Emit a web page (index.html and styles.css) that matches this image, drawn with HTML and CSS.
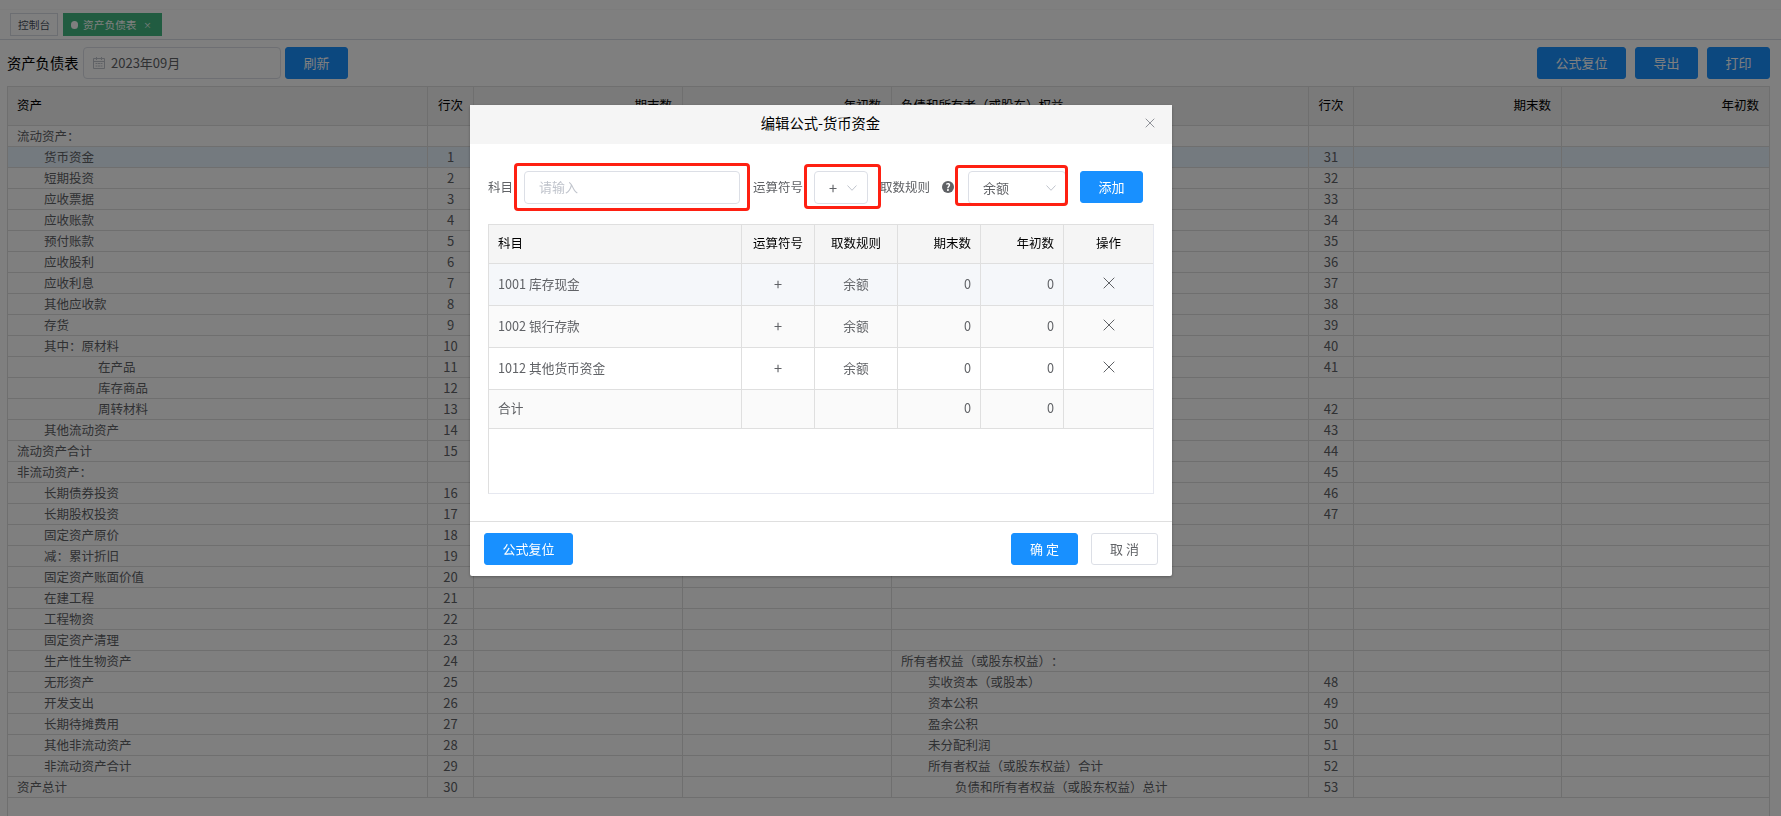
FILE: index.html
```html
<!DOCTYPE html>
<html lang="zh-CN">
<head>
    <meta charset="UTF-8">
    <meta name="viewport" content="width=device-width, initial-scale=1.0">
    <title>资产负债表</title>
    <link rel="stylesheet" href="styles.css">
</head>
<body>
    <div class="page">
        <div class="navbar"></div>
        <div class="tags">
            <span class="tag">控制台</span>
            <span class="tag active"><i class="dot"></i>资产负债表<i class="tag-close">×</i></span>
        </div>

        <div class="toolbar">
            <span class="toolbar-title">资产负债表</span>
            <div class="date-input">
                <svg class="calendar" viewBox="0 0 12 12" fill="none" stroke="#c0c4cc">
                    <path d="M.5 1.5h11v10H.5zM.5 4.5h11M3.5 0v3M8.5 0v3M2.5 6.5h2M5 6.5h2M7.500 6.500h2M2.500 9h2M5 9h2M7.500 9h2"/>
                </svg>
                <span>2023年09月</span>
            </div>
            <button class="btn primary">刷新</button>
            <div class="toolbar-right">
                <button class="btn primary">公式复位</button>
                <button class="btn primary">导出</button>
                <button class="btn primary">打印</button>
            </div>
        </div>

        <div class="sheet-wrap">
            <table class="sheet">
                <colgroup>
                    <col class="w-name"><col class="w-no"><col class="w-end"><col class="w-begin">
                    <col class="w-name2"><col class="w-no2"><col class="w-end2"><col>
                </colgroup>
                <thead>
                    <tr>
                        <th>资产</th>
                        <th class="center">行次</th>
                        <th class="right">期末数</th>
                        <th class="right">年初数</th>
                        <th>负债和所有者（或股东）权益</th>
                        <th class="center">行次</th>
                        <th class="right">期末数</th>
                        <th class="right">年初数</th>
                    </tr>
                </thead>
                <tbody id="sheetBody"></tbody>
            </table>
        </div>
    </div>

    <div class="mask">
        <div class="dialog">
            <div class="dialog-header">
                <span class="dialog-title">编辑公式-货币资金</span>
                <svg class="dialog-close" viewBox="0 0 10 10" fill="none" stroke="#909399"><path d="M.7.7l8.600 8.600M9.300.7L.7 9.300"/></svg>
            </div>

            <div class="dialog-body">
                <div class="form">
                    <label class="label-subject">科目</label>
                    <div class="field subject">请输入</div>
                    <label class="label-symbol">运算符号</label>
                    <div class="field symbol">
                        <span>+</span>
                        <svg class="arrow" viewBox="0 0 10 6" fill="none" stroke="#c0c4cc"><path d="M.5.5L5 5.300 9.500.5"/></svg>
                    </div>
                    <label class="label-rule">取数规则</label>
                    <span class="help">?</span>
                    <div class="field rule">
                        <span>余额</span>
                        <svg class="arrow" viewBox="0 0 10 6" fill="none" stroke="#c0c4cc"><path d="M.5.5L5 5.300 9.500.5"/></svg>
                    </div>
                    <button class="btn primary">添加</button>
                </div>

                <div class="formula-wrap">
                    <table class="formula">
                        <colgroup>
                            <col class="f-subject"><col class="f-symbol"><col class="f-num"><col class="f-num"><col class="f-num"><col>
                        </colgroup>
                        <thead>
                            <tr>
                                <th>科目</th>
                                <th class="center">运算符号</th>
                                <th class="center">取数规则</th>
                                <th class="right">期末数</th>
                                <th class="right">年初数</th>
                                <th class="center">操作</th>
                            </tr>
                        </thead>
                        <tbody>
                            <tr class="hover">
                                <td>1001 库存现金</td>
                                <td class="center plus">+</td>
                                <td class="center">余额</td>
                                <td class="right">0</td>
                                <td class="right">0</td>
                                <td class="center"><svg class="remove" viewBox="0 0 12 12" fill="none" stroke="#606266"><path d="M.7.7l10.600 10.600M11.300.7L.7 11.300"/></svg></td>
                            </tr>
                            <tr class="striped">
                                <td>1002 银行存款</td>
                                <td class="center plus">+</td>
                                <td class="center">余额</td>
                                <td class="right">0</td>
                                <td class="right">0</td>
                                <td class="center"><svg class="remove" viewBox="0 0 12 12" fill="none" stroke="#606266"><path d="M.7.7l10.600 10.600M11.300.7L.7 11.300"/></svg></td>
                            </tr>
                            <tr>
                                <td>1012 其他货币资金</td>
                                <td class="center plus">+</td>
                                <td class="center">余额</td>
                                <td class="right">0</td>
                                <td class="right">0</td>
                                <td class="center"><svg class="remove" viewBox="0 0 12 12" fill="none" stroke="#606266"><path d="M.7.7l10.600 10.600M11.300.7L.7 11.300"/></svg></td>
                            </tr>
                            <tr class="striped total">
                                <td>合计</td>
                                <td></td>
                                <td></td>
                                <td class="right">0</td>
                                <td class="right">0</td>
                                <td></td>
                            </tr>
                        </tbody>
                    </table>
                </div>
            </div>

            <div class="dialog-footer">
                <button class="btn primary">公式复位</button>
                <div class="footer-right">
                    <button class="btn primary wide">确 定</button>
                    <button class="btn wide">取 消</button>
                </div>
            </div>
        </div>
    </div>

    <script src="script.js"></script>
</body>
</html>
```

FILE: styles.css
```css
* {
    box-sizing: border-box;
}
body {
    margin: 0;
    height: 816px;
    overflow: hidden;
    background: #fff;
    color: #606266;
    font-family: "Noto Sans CJK SC", sans-serif;
    font-size: 12.5px;
    text-spacing-trim: space-all;
}
i {
    font-style: normal;
}
table {
    width: 100%;
    table-layout: fixed;
    border-collapse: separate;
    border-spacing: 0;
}
th, td {
    padding: 0 10px 0 9px;
    border-right: 1px solid #dfdfdf;
    border-bottom: 1px solid #dfdfdf;
    text-align: left;
    white-space: nowrap;
}
th {
    height: 39px;
    padding-bottom: 3px;
    background: #f5f5f5;
    color: #000;
    font-weight: 400;
}
.center {
    padding-left: 0;
    padding-right: 0;
    text-align: center;
}
.right {
    text-align: right;
}
.page {
    display: flex;
    flex-direction: column;
    height: 816px;
}

/* tags */
.navbar {
    height: 10px;
    flex-shrink: 0;
    border-bottom: 1px solid #f9f9f9;
}
.tags {
    display: flex;
    flex-shrink: 0;
    gap: 5px;
    height: 30px;
    padding: 3px 10px 0;
    border-bottom: 1px solid #d8dce5;
}
.tag {
    display: flex;
    align-items: center;
    height: 23px;
    padding: 0 7px;
    border: 1px solid #d8dce5;
    color: #495060;
    font-size: 10.7px;
}
.tag.active {
    width: 99px;
    background: #42b983;
    border-color: #42b983;
    color: #fff;
}
.dot {
    width: 7px;
    height: 8px;
    margin-right: 5px;
    border-radius: 4px;
    background: #fff;
}
.tag-close {
    margin-left: 7px;
    padding-bottom: 1px;
    font-size: 8px;
}

/* toolbar */
.toolbar {
    display: flex;
    align-items: center;
    flex-shrink: 0;
    height: 46px;
    padding: 0 11px 0 7px;
}
.toolbar-title {
    width: 76px;
    padding-bottom: 2px;
    color: #000;
    font-size: 14.3px;
}
.date-input {
    display: flex;
    align-items: center;
    gap: 6px;
    width: 198px;
    height: 32px;
    margin-right: 4px;
    padding-left: 9px;
    border: 1px solid #dcdfe6;
    border-radius: 4px;
    font-size: 13px;
}
.date-input span {
    padding-bottom: 2px;
}
.calendar {
    width: 12px;
    height: 12px;
    margin-bottom: 1px;
}
.btn {
    height: 32px;
    padding: 0 17.5px 2px;
    border: 1px solid #dcdfe6;
    border-radius: 3px;
    background: #fff;
    color: #606266;
    font-family: inherit;
    font-size: 13px;
    line-height: 1;
    white-space: nowrap;
}
.btn.primary {
    border-color: #1890ff;
    background: #1890ff;
    color: #fff;
}
.btn.wide {
    width: 67px;
    padding-left: 0;
    padding-right: 0;
}
.toolbar-right {
    display: flex;
    gap: 9px;
    margin-left: auto;
}

/* balance sheet */
.sheet-wrap {
    flex: 1;
    margin: 0 11px 0 7px;
    border-left: 1px solid #dfdfdf;
    border-right: 1px solid #dfdfdf;
    border-top: 1px solid #dfdfdf;
}
.sheet td {
    height: 21px;
    padding-bottom: 1px;
    line-height: 18px;
}
.sheet th:last-child, .sheet td:last-child,
.formula th:last-child, .formula td:last-child {
    border-right: none;
}
.sheet td.center {
    font-size: 13px;
}
.sheet .level1 {
    padding-left: 36px;
}
.sheet .level2 {
    padding-left: 63px;
}
.sheet .level3 {
    padding-left: 90px;
}
.sheet .current td {
    background: #e8f4ff;
}
.w-name {
    width: 420px;
}
.w-no {
    width: 46px;
}
.w-end, .w-begin {
    width: 209px;
}
.w-name2 {
    width: 417px;
}
.w-no2 {
    width: 45px;
}
.w-end2 {
    width: 208px;
}

/* dialog */
.mask {
    position: fixed;
    inset: 0;
    display: flex;
    align-items: flex-start;
    padding: 105px 0 0 470px;
    background: rgba(0, 0, 0, 0.5);
}
.dialog {
    display: flex;
    flex-direction: column;
    width: 702px;
    height: 471px;
    border-radius: 2px;
    background: #fff;
    box-shadow: 0 1px 3px rgba(0, 0, 0, 0.3);
}
.dialog-header {
    display: flex;
    align-items: center;
    height: 39px;
    padding-right: 17px;
    background: #f5f5f5;
}
.dialog-title {
    flex: 1;
    padding: 0 0 4px 26px;
    color: #000;
    font-size: 14.3px;
    text-align: center;
}
.dialog-close {
    width: 10px;
    height: 10px;
    margin-bottom: 3px;
}
.dialog-body {
    flex: 1;
    padding: 27px 18px 0;
}
.form {
    display: flex;
    align-items: center;
    height: 33px;
    margin-bottom: 20px;
    white-space: nowrap;
}
.form label {
    padding-bottom: 3px;
}
.form .btn {
    margin-bottom: 1px;
}
.field {
    position: relative;
    display: flex;
    align-items: center;
    justify-content: space-between;
    height: 33px;
    padding-bottom: 2px;
    border: 1px solid #dcdfe6;
    border-radius: 4px;
    font-size: 13px;
}
.field::after {
    content: "";
    position: absolute;
    border: 3px solid #fe2012;
    border-radius: 4px;
}
.label-subject {
    width: 36px;
}
.subject {
    width: 216px;
    padding-left: 14px;
    color: #c0c4cc;
}
.subject::after {
    inset: -9px -11px -8px -11px;
}
.label-symbol {
    width: 61px;
    margin-left: 13px;
}
.symbol {
    width: 54px;
    padding: 0 10px 1px 14px;
}
.symbol span {
    font-size: 14.5px;
}
.symbol::after {
    inset: -8px -14px -6px -11px;
}
.label-rule {
    width: 61px;
    margin-left: 12px;
}
.help {
    width: 12px;
    height: 12px;
    margin-left: 1px;
    margin-bottom: 1px;
    border-radius: 50%;
    background: #606266;
    color: #fff;
    font-size: 10px;
    font-weight: 700;
    line-height: 12px;
    text-align: center;
}
.rule {
    width: 98px;
    margin-left: 14px;
    margin-right: 14px;
    padding: 0 9px 1px 14px;
}
.rule::after {
    inset: -7px -3px -3px -14px;
}
.arrow {
    width: 10px;
    height: 6px;
    margin-top: 2px;
}
.formula-wrap {
    height: 270px;
    border: 1px solid #dfdfdf;
    border-right-color: #e6e8f0;
    border-bottom-color: #e6e8f0;
}
.formula td {
    height: 42px;
    padding-bottom: 3px;
    font-size: 12.7px;
}
.formula .plus {
    font-size: 14.5px;
}
.formula .total td {
    height: 39px;
}
.formula .hover td {
    background: #f5f7fa;
}
.formula .striped td {
    background: #fafafa;
}
.formula .right {
    padding-right: 9px;
}
.f-subject {
    width: 253px;
}
.f-symbol {
    width: 73px;
}
.f-num {
    width: 83px;
}
.remove {
    display: block;
    width: 12px;
    height: 12px;
    margin: 0 auto;
}
.dialog-footer {
    display: flex;
    justify-content: space-between;
    height: 55px;
    padding: 11px 14px 0;
    border-top: 1px solid #dfdfdf;
}
.dialog-footer .btn {
    padding-bottom: 1px;
}
.footer-right {
    display: flex;
    gap: 13px;
}
```

FILE: script.js
```javascript
// [资产, level, 行次, 负债和所有者权益, level, 行次]
const rows = [
    ['流动资产：', 0, '', '', 0, ''],
    ['货币资金', 1, 1, '', 1, 31],
    ['短期投资', 1, 2, '', 1, 32],
    ['应收票据', 1, 3, '', 1, 33],
    ['应收账款', 1, 4, '', 1, 34],
    ['预付账款', 1, 5, '', 1, 35],
    ['应收股利', 1, 6, '', 1, 36],
    ['应收利息', 1, 7, '', 1, 37],
    ['其他应收款', 1, 8, '', 1, 38],
    ['存货', 1, 9, '', 1, 39],
    ['其中：原材料', 1, 10, '', 1, 40],
    ['在产品', 3, 11, '', 1, 41],
    ['库存商品', 3, 12, '', 1, ''],
    ['周转材料', 3, 13, '', 1, 42],
    ['其他流动资产', 1, 14, '', 1, 43],
    ['流动资产合计', 0, 15, '', 1, 44],
    ['非流动资产：', 0, '', '', 1, 45],
    ['长期债券投资', 1, 16, '', 1, 46],
    ['长期股权投资', 1, 17, '', 1, 47],
    ['固定资产原价', 1, 18, '', 0, ''],
    ['减：累计折旧', 1, 19, '', 0, ''],
    ['固定资产账面价值', 1, 20, '', 0, ''],
    ['在建工程', 1, 21, '', 0, ''],
    ['工程物资', 1, 22, '', 0, ''],
    ['固定资产清理', 1, 23, '', 0, ''],
    ['生产性生物资产', 1, 24, '所有者权益（或股东权益）：', 0, ''],
    ['无形资产', 1, 25, '实收资本（或股本）', 1, 48],
    ['开发支出', 1, 26, '资本公积', 1, 49],
    ['长期待摊费用', 1, 27, '盈余公积', 1, 50],
    ['其他非流动资产', 1, 28, '未分配利润', 1, 51],
    ['非流动资产合计', 1, 29, '所有者权益（或股东权益）合计', 1, 52],
    ['资产总计', 0, 30, '负债和所有者权益（或股东权益）总计', 2, 53]
];

document.getElementById('sheetBody').innerHTML = rows.map((r, i) => `
    <tr class="${i === 1 ? 'current' : ''}">
        <td class="level${r[1]}">${r[0]}</td>
        <td class="center">${r[2]}</td>
        <td></td>
        <td></td>
        <td class="level${r[4]}">${r[3]}</td>
        <td class="center">${r[5]}</td>
        <td></td>
        <td></td>
    </tr>`).join('');
```
